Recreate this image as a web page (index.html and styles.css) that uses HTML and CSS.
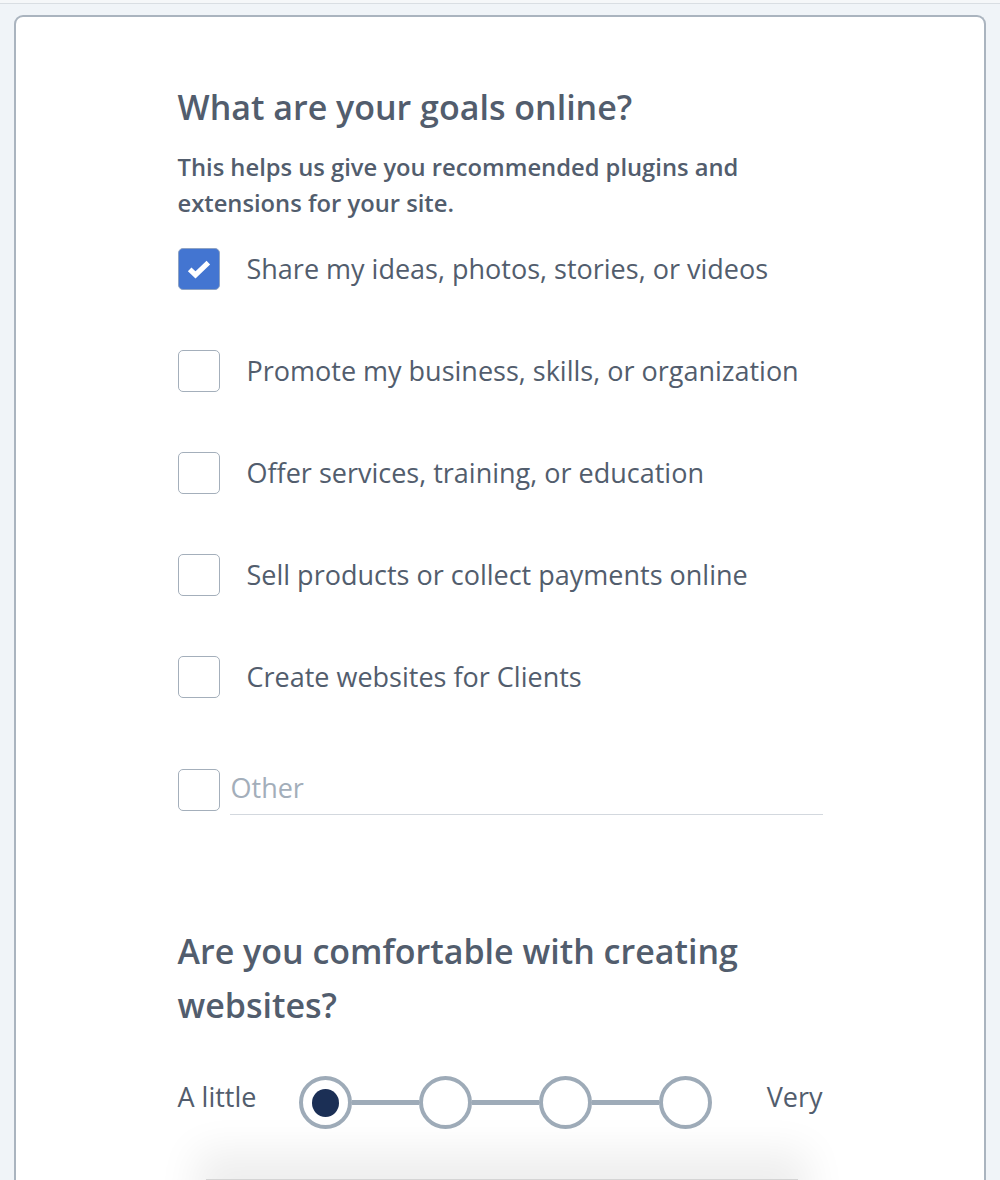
FILE: index.html
```html
<!DOCTYPE html>
<html>
<head>
  <meta charset="UTF-8">
  <title>Site goals</title>
  <link rel="stylesheet" href="styles.css">
</head>
<body>
  <div class="topbar"></div>
  <div class="card">
    <div class="content">
      <h2 class="question">What are your goals online?</h2>
      <p class="hint">This helps us give you recommended plugins and extensions for your site.</p>

      <div class="options">
        <label class="option">
          <span class="box checked">
            <svg viewBox="0 0 24 24"><path d="M4 12.3l5 4.8L20 6.6" fill="none" stroke="#fff" stroke-width="4.4" stroke-linecap="butt" stroke-linejoin="miter"/></svg>
          </span>
          <span class="option-text">Share my ideas, photos, stories, or videos</span>
        </label>
        <label class="option">
          <span class="box"></span>
          <span class="option-text">Promote my business, skills, or organization</span>
        </label>
        <label class="option">
          <span class="box"></span>
          <span class="option-text">Offer services, training, or education</span>
        </label>
        <label class="option">
          <span class="box"></span>
          <span class="option-text">Sell products or collect payments online</span>
        </label>
        <label class="option">
          <span class="box"></span>
          <span class="option-text">Create websites for Clients</span>
        </label>
        <div class="option other">
          <span class="box"></span>
          <input class="other-input" type="text" placeholder="Other">
        </div>
      </div>

      <h2 class="question second">Are you comfortable with creating websites?</h2>

      <div class="scale">
        <span class="scale-label">A little</span>
        <div class="steps">
          <span class="step selected"><span class="dot"></span></span>
          <span class="line"></span>
          <span class="step"></span>
          <span class="line"></span>
          <span class="step"></span>
          <span class="line"></span>
          <span class="step"></span>
        </div>
        <span class="scale-label end">Very</span>
      </div>
    </div>
    <div class="footer-shadow"></div>
  </div>
</body>
</html>
```

FILE: styles.css
```css
:root {
  --text: #525d6d;
  --muted: #a3aeba;
  --border: #a4afbb;
  --blue: #4375d1;
  --navy: #1b2f55;
  --page: #f0f4f8;
}

* {
  box-sizing: border-box;
}

body {
  margin: 0;
  background: var(--page);
  font-family: "Open Sans", "Noto Sans", sans-serif;
  color: var(--text);
  height: 1180px;
  overflow: hidden;
}

.topbar {
  height: 4px;
  border-bottom: 1px solid #d9dee3;
  background: #f5f7f9;
}

.card {
  margin: 11px 14px 0;
  background: #fff;
  border: 2px solid #aab4bf;
  border-bottom: none;
  border-radius: 9px 9px 0 0;
  height: 1200px;
  position: relative;
}

.content {
  width: 645px;
  margin: 0 auto;
  padding-top: 63px;
}

.question {
  font-size: 34px;
  font-weight: 600;
  line-height: 54px;
  margin: 0;
}

.hint {
  font-size: 23.75px;
  font-weight: 600;
  line-height: 36px;
  margin: 15px 0 0;
}

.options {
  display: flex;
  flex-direction: column;
  gap: 60px;
  margin-top: 27px;
}

.option {
  display: flex;
  align-items: center;
  gap: 27px;
  height: 42px;
}

.box {
  width: 42px;
  height: 42px;
  flex: none;
  border: 1.5px solid var(--border);
  border-radius: 5px;
  background: #fff;
  display: flex;
  align-items: center;
  justify-content: center;
}

.box.checked {
  background: var(--blue);
  border-color: #8ea3c4;
}

.box svg {
  width: 28px;
  height: 28px;
}

.option-text {
  font-size: 27px;
  line-height: 36px;
}

.option.other {
  gap: 10px;
  margin-top: 11px;
  align-items: flex-start;
  height: 46px;
}

.other-input {
  flex: 1;
  border: none;
  border-bottom: 1.5px solid #d3d8de;
  font-family: inherit;
  font-size: 27px;
  color: var(--text);
  padding: 0 0 8px 1px;
  height: 46px;
  outline: none;
  background: transparent;
}

.other-input::placeholder {
  color: var(--muted);
}

.question.second {
  margin-top: 109px;
}

.scale {
  display: flex;
  align-items: center;
  margin-top: 44px;
}

.scale-label {
  font-size: 27px;
  margin-bottom: 12px;
}

.scale-label.end {
  margin-left: auto;
}

.steps {
  display: flex;
  align-items: center;
  margin-left: 43px;
}

.step {
  width: 53px;
  height: 53px;
  border: 4.5px solid #9eabb8;
  border-radius: 50%;
  display: flex;
  align-items: center;
  justify-content: center;
  flex: none;
}

.step .dot {
  width: 27px;
  height: 28px;
  border-radius: 50%;
  background: var(--navy);
}

.line {
  width: 67px;
  height: 5px;
  background: #9eabb8;
}

.footer-shadow {
  position: absolute;
  left: 190px;
  right: 186px;
  top: 1162px;
  height: 60px;
  background: #fff;
  border-top: 1px solid #d4d4d4;
  box-shadow: 0 -18px 40px 10px rgba(0, 0, 0, 0.07);
}
```
